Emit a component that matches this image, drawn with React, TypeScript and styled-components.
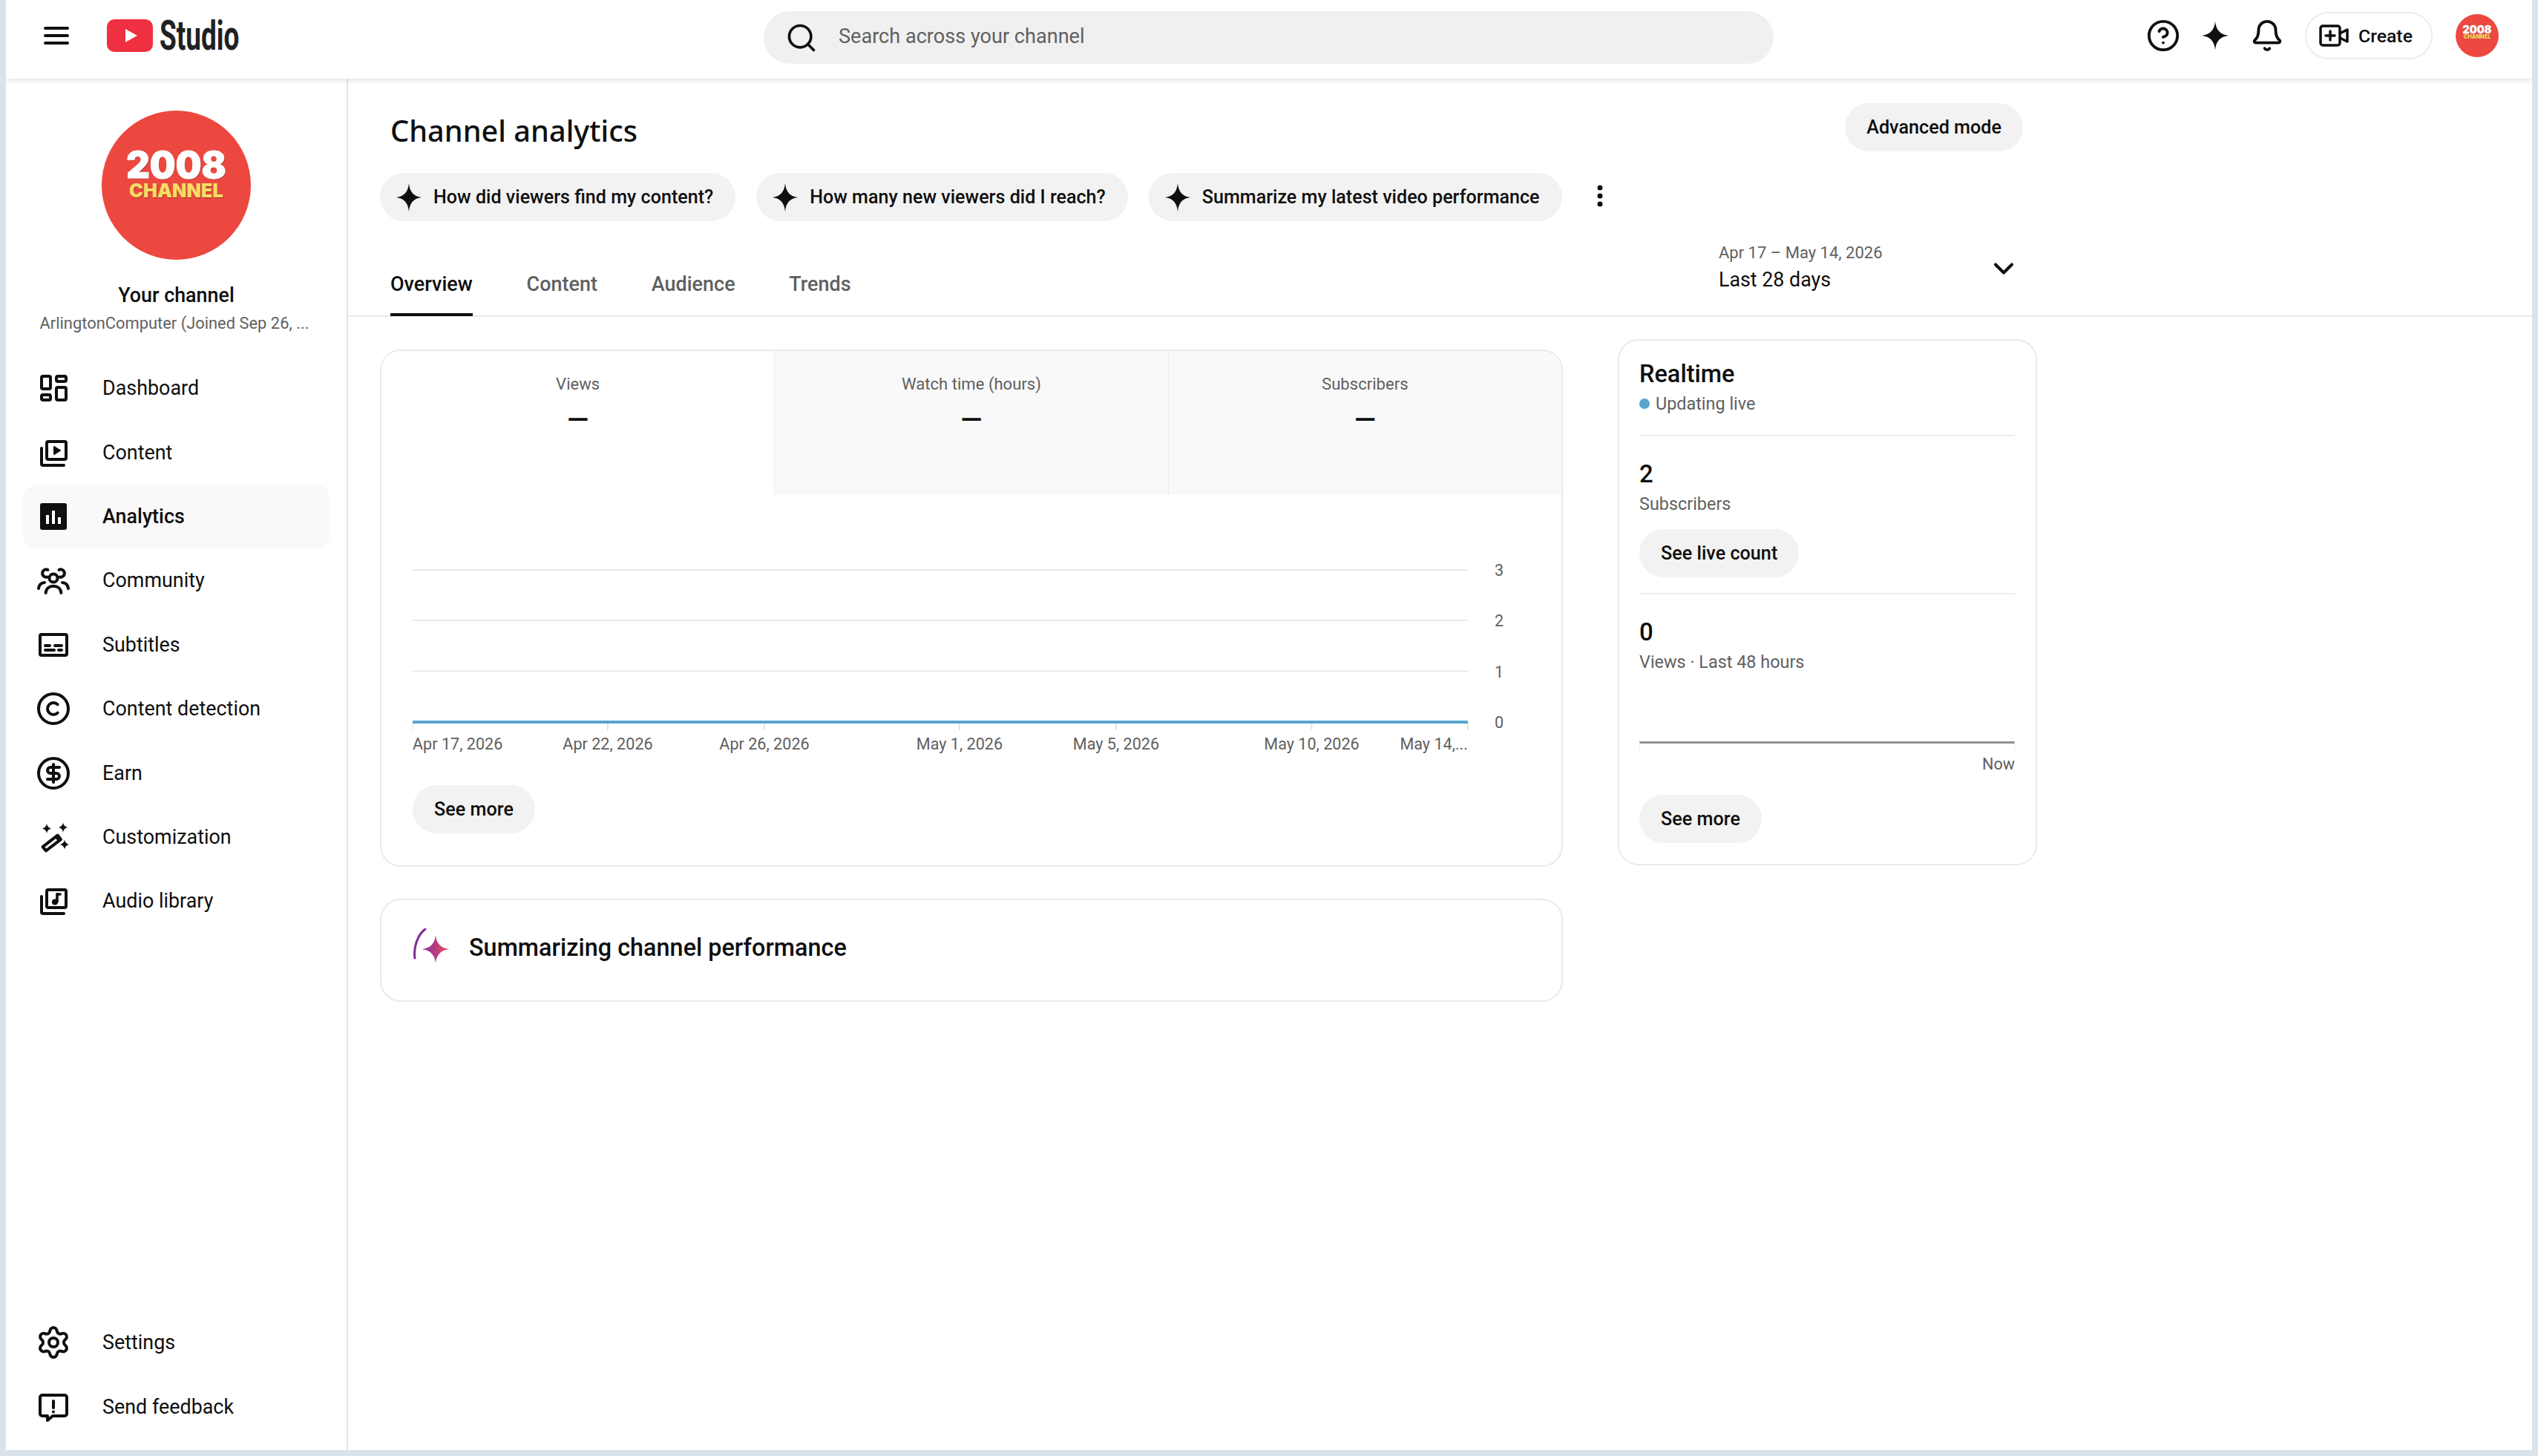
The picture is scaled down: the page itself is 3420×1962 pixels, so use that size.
import React from 'react';
import styled, { createGlobalStyle } from 'styled-components';
import { Bell, ChevronDown, CircleDollarSign, CircleHelp, Copyright, Search, Settings } from 'lucide-react';

// =============================================================================
// Icons
// =============================================================================

const STAR = 'M12 .5C12.7 7.6 16.4 11.3 23.5 12 16.4 12.7 12.7 16.4 12 23.5 11.3 16.4 7.6 12.7.5 12 7.6 11.3 11.3 7.6 12 .5Z';

const Line = ({ children }: { children: React.ReactNode }) => (
  <svg viewBox="0 0 24 24" width="48" height="48" fill="none" stroke="#0f0f0f" strokeWidth="2" strokeLinecap="round" strokeLinejoin="round">
    {children}
  </svg>
);

const DashboardIcon = () => (
  <Line>
    <rect x="4" y="4" width="6" height="8.5" rx="1" />
    <rect x="14" y="4" width="6.5" height="3.5" rx="1" />
    <rect x="4" y="16.5" width="6" height="3.5" rx="1" />
    <rect x="14" y="11.5" width="6.5" height="8.5" rx="1" />
  </Line>
);

const ContentIcon = () => (
  <Line>
    <rect x="7.5" y="4.5" width="13" height="12" rx="1" />
    <path d="M12.5 8v5l4-2.5z" fill="#0f0f0f" strokeWidth="1" />
    <path d="M4 9v10.5a1 1 0 0 0 1 1h14" />
  </Line>
);

const AnalyticsIcon = () => (
  <svg viewBox="0 0 24 24" width="48" height="48">
    <rect x="3" y="3" width="18" height="18" rx="1.5" fill="#0f0f0f" />
    <path d="M7 11h2v6H7zM11 8h2v9h-2zM15 12.5h2V17h-2z" fill="#fff" />
  </svg>
);

const CommunityIcon = () => (
  <Line>
    <circle cx="12" cy="10.5" r="2.8" />
    <path d="M6.8 20.5c.3-3 2.5-4.6 5.2-4.6s4.9 1.6 5.2 4.6" />
    <path d="M7.8 9.8A2.6 2.6 0 1 1 8.2 4.9" />
    <path d="M16.2 9.8a2.6 2.6 0 1 0-.4-4.9" />
    <path d="M2 17.5c.3-2.5 2-3.8 4-4M22 17.5c-.3-2.5-2-3.8-4-4" />
  </Line>
);

const SubtitlesIcon = () => (
  <Line>
    <rect x="3" y="5" width="18" height="14" rx="1" />
    <path d="M6.500 12.500h3M13 12.500h4.500M6.500 15.500h6M15.500 15.500h2" />
  </Line>
);

const WandIcon = () => (
  <svg viewBox="0 0 24 24" width="48" height="48" fill="none">
    <path d="M4.800 18.600 14.800 10.800 17 13.600 7 21.200z" stroke="#0f0f0f" strokeWidth="2" strokeLinejoin="round" />
    <path d="M13 12.200 14.800 10.800 17 13.600 15.200 15z" fill="#0f0f0f" />
    <path d="M7.500 3c.3 1.800 1.400 2.900 3.200 3.300-1.800.3-2.900 1.400-3.200 3.200-.3-1.800-1.400-2.900-3.200-3.200C6.100 5.900 7.200 4.800 7.500 3ZM18.500 2.200c.3 1.800 1.400 2.900 3.200 3.300-1.800.3-2.900 1.400-3.200 3.200-.3-1.800-1.400-2.900-3.200-3.200 1.800-.4 2.900-1.500 3.200-3.300ZM19.500 13.700c.3 1.800 1.400 2.900 3.200 3.300-1.800.3-2.900 1.400-3.200 3.200-.3-1.800-1.400-2.900-3.200-3.200 1.800-.4 2.900-1.500 3.200-3.300Z" fill="#0f0f0f" />
  </svg>
);

const AudioIcon = () => (
  <Line>
    <rect x="7.500" y="4.500" width="13" height="12" rx="1" />
    <path d="M14.500 7.500v5" strokeWidth="1.800" />
    <path d="M14.500 7.500h2" strokeWidth="1.800" />
    <circle cx="13" cy="12.700" r="1.500" fill="#0f0f0f" strokeWidth="1" />
    <path d="M4 9v10.500a1 1 0 0 0 1 1h14" />
  </Line>
);

const FeedbackIcon = () => (
  <Line>
    <path d="M4.500 4h15A1.500 1.500 0 0 1 21 5.500v11a1.500 1.500 0 0 1-1.500 1.500h-8l-3.500 3v-3H4.500A1.500 1.500 0 0 1 3 16.500v-11A1.500 1.500 0 0 1 4.500 4Z" />
    <path d="M12 8v4.500M12 15.200v.1" />
  </Line>
);

const GradientSpark = () => (
  <SparkIcon viewBox="0 0 50 48" width="50" height="48">
    <defs>
      <linearGradient id="spark" x1="0" x2="1" y1="0" y2="0">
        <stop offset="0" stopColor="#86299f" />
        <stop offset="1" stopColor="#e8505c" />
      </linearGradient>
    </defs>
    <path d="M17 1C6 9 1 27 3 40" fill="none" stroke="#7d2a94" strokeWidth="3" strokeLinecap="round" />
    <path d="M31 9C32 20 38 27 50 28 38 29 32 36 31 47 30 36 24 29 12 28 24 27 30 20 31 9Z" fill="url(#spark)" />
  </SparkIcon>
);

const Star = ({ size, height }: { size: number; height: number }) => (
  <svg viewBox="0 0 24 24" width={size} height={height} preserveAspectRatio="none">
    <path d={STAR} fill="#0f0f0f" />
  </svg>
);

// =============================================================================
// Data
// =============================================================================

const NAV = [
  { label: 'Dashboard', icon: <DashboardIcon /> },
  { label: 'Content', icon: <ContentIcon /> },
  { label: 'Analytics', icon: <AnalyticsIcon />, active: true },
  { label: 'Community', icon: <CommunityIcon /> },
  { label: 'Subtitles', icon: <SubtitlesIcon /> },
  { label: 'Content detection', icon: <Copyright size={48} strokeWidth={2} /> },
  { label: 'Earn', icon: <CircleDollarSign size={48} strokeWidth={2} /> },
  { label: 'Customization', icon: <WandIcon /> },
  { label: 'Audio library', icon: <AudioIcon /> },
];

const CHIPS = ['How did viewers find my content?', 'How many new viewers did I reach?', 'Summarize my latest video performance'];
const TABS = ['Overview', 'Content', 'Audience', 'Trends'];
const METRICS = ['Views', 'Watch time (hours)', 'Subscribers'];

const GRID = [
  { y: 101, label: '3' },
  { y: 169, label: '2' },
  { y: 237.500, label: '1' },
];

const X_TICKS = [
  { x: 0, label: 'Apr 17, 2026', anchor: 'start' },
  { x: 263, label: 'Apr 22, 2026', anchor: 'middle' },
  { x: 474, label: 'Apr 26, 2026', anchor: 'middle' },
  { x: 737, label: 'May 1, 2026', anchor: 'middle' },
  { x: 948, label: 'May 5, 2026', anchor: 'middle' },
  { x: 1211.500, label: 'May 10, 2026', anchor: 'middle' },
  { x: 1422, label: 'May 14,...', anchor: 'end' },
];

// =============================================================================
// Main Component
// =============================================================================

const App = () => (
  <Page>
    <GlobalStyle />
    <Header>
      <Brand>
        <MenuButton viewBox="0 0 34 26" width="34" height="26">
          <path d="M2 3h30M2 13h30M2 23h30" stroke="#0f0f0f" strokeWidth="4" strokeLinecap="round" />
        </MenuButton>
        <svg viewBox="0 0 62 44" width="62" height="44">
          <rect width="62" height="44" rx="10" fill="#ee3040" />
          <path d="M25 13v18l16-9z" fill="#fff" />
        </svg>
        <Wordmark>Studio</Wordmark>
      </Brand>
      <SearchBar>
        <Search size={44} strokeWidth={2} color="#0f0f0f" />
        <SearchText>Search across your channel</SearchText>
      </SearchBar>
      <HeaderActions>
        <CircleHelp size={46} strokeWidth={2} color="#0f0f0f" />
        <Star size={38} height={40} />
        <Bell size={46} strokeWidth={2} color="#0f0f0f" />
        <CreateButton>
          <svg viewBox="0 0 40 30" width="40" height="30" fill="none" stroke="#0f0f0f" strokeWidth="3.500" strokeLinejoin="round" strokeLinecap="round">
            <rect x="2" y="2" width="26" height="26" rx="3" />
            <path d="M15 9v12M9 15h12" />
            <path d="M28 12l10-5v16l-10-5" />
          </svg>
          Create
        </CreateButton>
        <HeaderBadge $size={58}>
          <strong>2008</strong>
          <span>CHANNEL</span>
        </HeaderBadge>
      </HeaderActions>
    </Header>
    <Body>
      <Sidebar>
        <ChannelBadge $size={201}>
          <strong>2008</strong>
          <span>CHANNEL</span>
        </ChannelBadge>
        <ChannelName>Your channel</ChannelName>
        <ChannelMeta>ArlingtonComputer (Joined Sep 26, ...</ChannelMeta>
        <Nav>
          {NAV.map((item) => (
            <NavRow key={item.label} $active={item.active}>
              <NavIcon>{item.icon}</NavIcon>
              {item.label}
            </NavRow>
          ))}
        </Nav>
        <BottomNav>
          <NavRow>
            <NavIcon>
              <Settings size={48} strokeWidth={2} />
            </NavIcon>
            Settings
          </NavRow>
          <NavRow>
            <NavIcon>
              <FeedbackIcon />
            </NavIcon>
            Send feedback
          </NavRow>
        </BottomNav>
      </Sidebar>
      <Main>
        <TitleRow>
          <Title>Channel analytics</Title>
          <PillButton>Advanced mode</PillButton>
        </TitleRow>
        <ChipRow>
          {CHIPS.map((chip) => (
            <Chip key={chip}>
              <Star size={36} height={40} />
              {chip}
            </Chip>
          ))}
          <Kebab viewBox="0 0 12 30" width="12" height="30">
            <circle cx="6" cy="4" r="3.500" />
            <circle cx="6" cy="15" r="3.500" />
            <circle cx="6" cy="26" r="3.500" />
          </Kebab>
        </ChipRow>
        <TabBar>
          <Tabs>
            {TABS.map((tab, index) => (
              <Tab key={tab} $active={index === 0}>
                {tab}
              </Tab>
            ))}
          </Tabs>
          <DatePicker>
            <div>
              <DateRange>Apr 17 – May 14, 2026</DateRange>
              <DateLabel>Last 28 days</DateLabel>
            </div>
            <DateChevron>
              <ChevronDown size={44} strokeWidth={2.200} color="#0f0f0f" />
            </DateChevron>
          </DatePicker>
        </TabBar>
        <Columns>
          <LeftColumn>
            <Card>
              <Metrics>
                {METRICS.map((metric, index) => (
                  <Metric key={metric} $active={index === 0}>
                    <MetricLabel>{metric}</MetricLabel>
                    <MetricValue>—</MetricValue>
                  </Metric>
                ))}
              </Metrics>
              <ChartArea>
                <svg viewBox="0 0 1500 370" width="1500" height="370" fontFamily="Roboto, sans-serif" fontSize="21.6" fill="#606060">
                  {GRID.map((line) => (
                    <g key={line.label}>
                      <line x1="0" x2="1422" y1={line.y} y2={line.y} stroke="#e8e8e8" strokeWidth="2" />
                      <text x="1464" y={line.y + 8} textAnchor="middle">
                        {line.label}
                      </text>
                    </g>
                  ))}
                  {X_TICKS.map((tick) => (
                    <g key={tick.label}>
                      <line x1={tick.x} x2={tick.x} y1="306" y2="317" stroke="#e5e5e5" strokeWidth="2" />
                      <text x={tick.x} y="343" textAnchor={tick.anchor}>
                        {tick.label}
                      </text>
                    </g>
                  ))}
                  <line x1="0" x2="1422" y1="306" y2="306" stroke="#55a6cc" strokeWidth="4" />
                  <text x="1464" y="314" textAnchor="middle">
                    0
                  </text>
                </svg>
                <PillButton>See more</PillButton>
              </ChartArea>
            </Card>
            <SummaryCard>
              <GradientSpark />
              Summarizing channel performance
            </SummaryCard>
          </LeftColumn>
          <RealtimeCard>
            <RealtimeTitle>Realtime</RealtimeTitle>
            <LiveRow>
              <LiveDot />
              Updating live
            </LiveRow>
            <Rule />
            <BigNumber>2</BigNumber>
            <Caption>Subscribers</Caption>
            <LiveCountButton>See live count</LiveCountButton>
            <Rule />
            <BigNumber>0</BigNumber>
            <Caption>Views · Last 48 hours</Caption>
            <Spark />
            <NowLabel>Now</NowLabel>
            <RealtimeMore>See more</RealtimeMore>
          </RealtimeCard>
        </Columns>
      </Main>
    </Body>
  </Page>
);

export default App;

// =============================================================================
// Styled Components
// =============================================================================

const GlobalStyle = createGlobalStyle`
  * {
    box-sizing: border-box;
  }

  html,
  body {
    margin: 0;
    background: #dbe3ea;
    color: #0f0f0f;
    font-family: Roboto, 'Liberation Sans', sans-serif;
  }
`;

const Page = styled.div`
  width: 3404px;
  height: 1954px;
  margin-left: 8px;
  display: flex;
  flex-direction: column;
  background: #fff;
  overflow: hidden;
`;

const Header = styled.header`
  position: relative;
  z-index: 1;
  flex: none;
  height: 106px;
  display: flex;
  align-items: center;
  box-shadow: 0 2px 8px rgba(0, 0, 0, 0.12);
  background: #fff;
`;

const Brand = styled.div`
  width: 1021px;
  padding: 0 0 10px 51px;
  display: flex;
  align-items: center;
`;

const MenuButton = styled.svg`
  margin: 0 51px 0 0;
`;

const Wordmark = styled.span`
  margin-left: 9px;
  font-size: 56px;
  font-weight: 700;
  line-height: 56px;
  color: #212121;
  transform: scaleX(0.66);
  transform-origin: left center;
`;

const SearchBar = styled.div`
  width: 1361px;
  height: 71px;
  margin-bottom: 5px;
  padding: 0 29px;
  display: flex;
  align-items: center;
  gap: 28px;
  border-radius: 36px;
  background: #f0f0f0;
`;

const SearchText = styled.span`
  margin-bottom: 3px;
  font-size: 27.100px;
  color: #606060;
`;

const HeaderActions = styled.div`
  margin-left: auto;
  padding: 0 45px 10px 0;
  display: flex;
  align-items: center;
  gap: 28px;
`;

const CreateButton = styled.div`
  width: 172px;
  height: 64px;
  padding-left: 17px;
  display: flex;
  align-items: center;
  gap: 13px;
  border: 2px solid #ececec;
  border-radius: 32px;
  font-size: 24.800px;
  font-weight: 500;
`;

const ChannelBadge = styled.div<{ $size: number }>`
  flex: none;
  width: ${({ $size }) => $size}px;
  height: ${({ $size }) => $size}px;
  padding-bottom: 0.14em;
  display: flex;
  flex-direction: column;
  align-items: center;
  justify-content: center;
  border-radius: 50%;
  background: #ec4840;
  font-family: Inter, Roboto, sans-serif;
  font-size: ${({ $size }) => $size}px;
  line-height: 1;

  strong {
    font-size: 0.244em;
    font-weight: 900;
    line-height: 0.85;
    color: #fff;
    -webkit-text-stroke: 0.02em #fff;
    text-shadow: 0.02em 0.03em 0 #9c2b26;
  }

  span {
    font-size: 0.126em;
    font-weight: 900;
    line-height: 1;
    color: #f7dc63;
    text-shadow: 0.02em 0.03em 0 #9c2b26;
  }
`;

const HeaderBadge = styled(ChannelBadge)`
  margin-left: 3px;
`;

const Body = styled.div`
  flex: 1;
  min-height: 0;
  display: flex;
`;

const Sidebar = styled.aside`
  flex: none;
  width: 461px;
  padding: 43px 0 15px;
  display: flex;
  flex-direction: column;
  align-items: center;
  border-right: 2px solid #e5e5e5;
`;

const ChannelName = styled.div`
  margin-top: 30px;
  font-size: 26.900px;
  font-weight: 500;
  line-height: 36px;
`;

const ChannelMeta = styled.div`
  margin: 5px 5px 0 0;
  font-size: 21.900px;
  line-height: 30px;
  color: #606060;
  white-space: nowrap;
`;

const Nav = styled.nav`
  width: 100%;
  margin-top: 29px;
`;

const BottomNav = styled(Nav)`
  margin-top: auto;
`;

const NavRow = styled.div<{ $active?: boolean }>`
  width: 415px;
  height: 86.400px;
  margin-left: 22px;
  padding-left: 18px;
  display: flex;
  align-items: center;
  gap: 42px;
  border-radius: 20px;
  background: ${({ $active }) => ($active ? '#f9f9f9' : 'transparent')};
  font-size: 26.900px;
  font-weight: ${({ $active }) => ($active ? 500 : 400)};
`;

const NavIcon = styled.span`
  display: flex;
  color: #0f0f0f;
`;

const Main = styled.main`
  flex: 1;
  min-width: 0;
`;

const TitleRow = styled.div`
  width: 2257px;
  padding: 33px 0 0 57px;
  display: flex;
  align-items: center;
  justify-content: space-between;
`;

const Title = styled.h1`
  margin: 8px 0 0;
  font-family: 'Noto Sans', sans-serif;
  font-size: 39.700px;
  font-weight: 500;
  line-height: 56px;
`;

const PillButton = styled.div`
  width: fit-content;
  height: 65px;
  padding: 0 29px;
  display: flex;
  align-items: center;
  border-radius: 33px;
  background: #f2f2f2;
  font-size: 25.200px;
  font-weight: 500;
  white-space: nowrap;
`;

const ChipRow = styled.div`
  margin-top: 29px;
  padding-left: 43px;
  display: flex;
  align-items: center;
  gap: 28px;
`;

const Chip = styled.div`
  height: 65px;
  padding: 0 30px 0 21px;
  display: flex;
  align-items: center;
  gap: 15px;
  border-radius: 33px;
  background: #f2f2f2;
  font-size: 25.100px;
  font-weight: 500;
  white-space: nowrap;
`;

const Kebab = styled.svg`
  margin: 0 0 4px 17px;
  fill: #0f0f0f;
`;

const TabBar = styled.div`
  height: 129px;
  padding-left: 57px;
  display: flex;
  align-items: flex-end;
  justify-content: space-between;
  border-bottom: 2px solid #e8e8e8;
`;

const Tabs = styled.div`
  display: flex;
  gap: 72.700px;
`;

const Tab = styled.div<{ $active: boolean }>`
  height: 68px;
  padding-top: 9px;
  border-bottom: 4px solid ${({ $active }) => ($active ? '#0f0f0f' : 'transparent')};
  margin-bottom: -1px;
  font-size: 27px;
  font-weight: 500;
  color: ${({ $active }) => ($active ? '#0f0f0f' : '#606060')};
`;

const DatePicker = styled.div`
  width: 410px;
  margin-right: 686px;
  padding-bottom: 30px;
  display: flex;
  align-items: center;
  justify-content: space-between;
  padding-right: 4px;
`;

const DateChevron = styled.span`
  display: flex;
  margin-top: 4px;
`;

const DateRange = styled.div`
  margin-top: 1px;
  font-size: 22px;
  line-height: 32px;
  color: #606060;
`;

const DateLabel = styled.div`
  margin-top: 2px;
  font-size: 26.800px;
  line-height: 36px;
`;

const Columns = styled.div`
  padding: 30px 0 0 43px;
  display: flex;
  align-items: flex-start;
  gap: 74px;
`;

const LeftColumn = styled.div`
  width: 1594px;
  margin-top: 14px;
  display: flex;
  flex-direction: column;
  gap: 43px;
`;

const Card = styled.section`
  height: 697px;
  border: 2px solid #eaeaea;
  border-radius: 28px;
  overflow: hidden;
`;

const Metrics = styled.div`
  height: 194px;
  display: flex;
`;

const Metric = styled.div<{ $active: boolean }>`
  flex: 1;
  padding-top: 28px;
  text-align: center;
  background: ${({ $active }) => ($active ? '#fff' : '#f9f9f9')};

  & + & {
    border-left: 1px solid #ececec;
  }
`;

const MetricLabel = styled.div`
  font-size: 22.100px;
  line-height: 32px;
  color: #606060;
`;

const MetricValue = styled.div`
  margin-top: 11px;
  font-size: 38px;
  font-weight: 500;
  line-height: 44px;
`;

const ChartArea = styled.div`
  padding-left: 42px;

  svg {
    display: block;
  }

  ${PillButton} {
    margin-top: 21px;
  }
`;

const SummaryCard = styled.section`
  height: 139px;
  padding: 0 0 8px 42px;
  display: flex;
  align-items: center;
  gap: 26px;
  border: 2px solid #eaeaea;
  border-radius: 28px;
  font-size: 32.400px;
  font-weight: 500;
`;

const SparkIcon = styled.svg`
  margin-bottom: 4px;
`;

const RealtimeCard = styled.section`
  width: 565px;
  height: 709px;
  padding: 23px 28px 0 27px;
  border: 2px solid #eaeaea;
  border-radius: 28px;
`;

const RealtimeTitle = styled.div`
  font-size: 32.500px;
  font-weight: 500;
  line-height: 44px;
`;

const LiveRow = styled.div`
  margin-top: 2px;
  display: flex;
  align-items: center;
  gap: 8px;
  font-size: 23.400px;
  line-height: 32px;
  color: #606060;
`;

const LiveDot = styled.span`
  width: 14px;
  height: 14px;
  border-radius: 50%;
  background: #55a6cc;
`;

const Rule = styled.div`
  height: 2px;
  margin-top: 26px;
  background: #ececec;
`;

const BigNumber = styled.div`
  margin-top: 29px;
  font-size: 33px;
  font-weight: 500;
  line-height: 44px;
`;

const Caption = styled.div`
  margin-top: 2px;
  font-size: 23.400px;
  line-height: 32px;
  color: #606060;
`;

const LiveCountButton = styled(PillButton)`
  margin-top: 18px;
  margin-bottom: -5px;
`;

const Spark = styled.div`
  height: 13px;
  margin-top: 91px;
  border-top: 3px solid #909090;
  border-left: 1px solid #eee;
  border-right: 1px solid #eee;
`;

const NowLabel = styled.div`
  margin-top: 2px;
  font-size: 21.600px;
  line-height: 32px;
  color: #606060;
  text-align: right;
`;

const RealtimeMore = styled(PillButton)`
  margin-top: 25px;
`;
